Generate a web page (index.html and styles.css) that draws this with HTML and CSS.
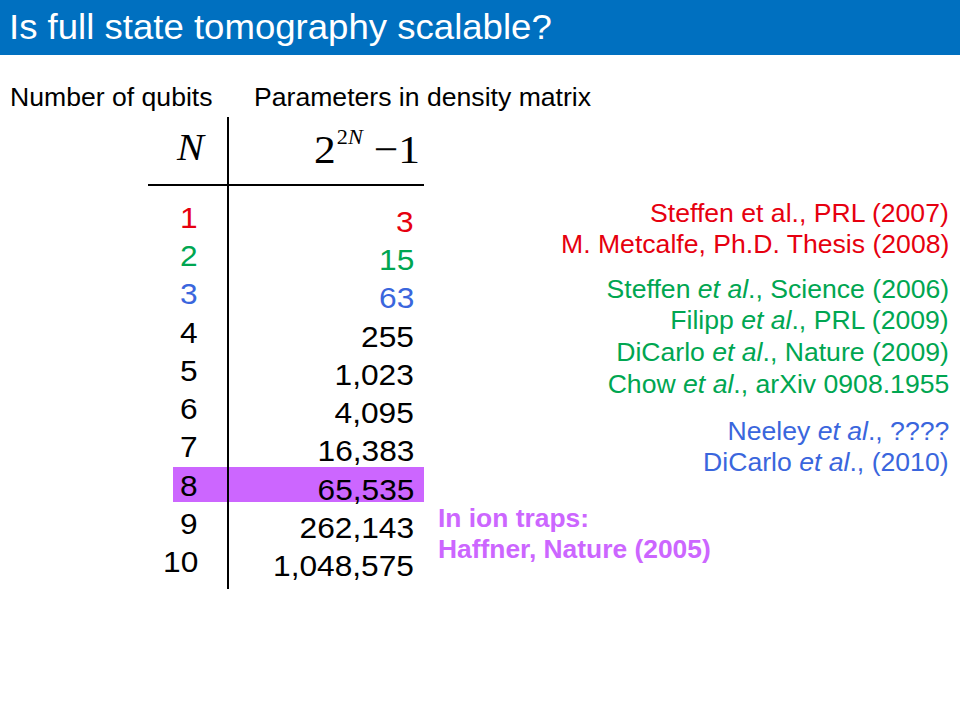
FILE: index.html
```html
<!DOCTYPE html>
<html lang="en">
<head>
<meta charset="utf-8">
<title>Is full state tomography scalable?</title>
<link rel="stylesheet" href="styles.css">
</head>
<body>
<header class="title-bar">
  <h1 class="title"><span class="sx sx-l">Is full state tomography scalable?</span></h1>
</header>

<div class="labels">
  <div class="label label-n"><span class="sx sx-l">Number of qubits</span></div>
  <div class="label label-p"><span class="sx sx-l">Parameters in density matrix</span></div>
</div>

<div class="content">
  <div class="qtable">
    <div class="col col-n">
      <div class="thead thead-n"><span class="sx sx-l math-n">N</span></div>
      <div class="tbody">
        <div class="cell red"><span class="sx sx-r">1</span></div>
        <div class="cell green"><span class="sx sx-r">2</span></div>
        <div class="cell blue"><span class="sx sx-r">3</span></div>
        <div class="cell"><span class="sx sx-r">4</span></div>
        <div class="cell"><span class="sx sx-r">5</span></div>
        <div class="cell"><span class="sx sx-r">6</span></div>
        <div class="cell"><span class="sx sx-r">7</span></div>
        <div class="cell hl"><span class="sx sx-r">8</span></div>
        <div class="cell"><span class="sx sx-r">9</span></div>
        <div class="cell"><span class="sx sx-r">10</span></div>
      </div>
    </div>
    <div class="col col-p">
      <div class="thead thead-p"><span class="sx sx-l formula">2<sup class="exp">2<i>N</i></sup> −1</span></div>
      <div class="tbody">
        <div class="cell red"><span class="sx sx-r">3</span></div>
        <div class="cell green"><span class="sx sx-r">15</span></div>
        <div class="cell blue"><span class="sx sx-r">63</span></div>
        <div class="cell"><span class="sx sx-r">255</span></div>
        <div class="cell"><span class="sx sx-r">1,023</span></div>
        <div class="cell"><span class="sx sx-r">4,095</span></div>
        <div class="cell"><span class="sx sx-r">16,383</span></div>
        <div class="cell hl"><span class="sx sx-r">65,535</span></div>
        <div class="cell"><span class="sx sx-r">262,143</span></div>
        <div class="cell"><span class="sx sx-r">1,048,575</span></div>
      </div>
    </div>
  </div>

  <div class="notes">
    <div class="group red">
      <div class="line"><span class="sx sx-r">Steffen et al., PRL (2007)</span></div>
      <div class="line"><span class="sx sx-r">M. Metcalfe, Ph.D. Thesis (2008)</span></div>
    </div>
    <div class="group green g-green">
      <div class="line"><span class="sx sx-r">Steffen <i>et al</i>., Science (2006)</span></div>
      <div class="line"><span class="sx sx-r">Filipp <i>et al</i>., PRL (2009)</span></div>
      <div class="line"><span class="sx sx-r">DiCarlo <i>et al</i>., Nature (2009)</span></div>
      <div class="line"><span class="sx sx-r">Chow <i>et al</i>., arXiv 0908.1955</span></div>
    </div>
    <div class="group blue g-blue">
      <div class="line"><span class="sx sx-r">Neeley <i>et al</i>., ????</span></div>
      <div class="line"><span class="sx sx-r">DiCarlo <i>et al</i>., (2010)</span></div>
    </div>
    <div class="group ion">
      <div class="line"><span class="sx sx-l">In ion traps:</span></div>
      <div class="line"><span class="sx sx-l">Haffner, Nature (2005)</span></div>
    </div>
  </div>
</div>
</body>
</html>
```

FILE: styles.css
```css
* {
  box-sizing: border-box;
}

html, body {
  margin: 0;
  padding: 0;
}

body {
  width: 960px;
  height: 720px;
  overflow: hidden;
  background: #ffffff;
  color: #000000;
  font-family: "Liberation Sans", Arial, sans-serif;
}

/* slightly wide text, as on the original slide */
.sx {
  display: inline-block;
  transform: scaleX(1.06);
  white-space: nowrap;
}

.sx-l {
  transform-origin: left center;
}

.sx-r {
  transform-origin: right center;
}

/* title bar */
.title-bar {
  height: 55px;
  background: #0070c0;
  padding-left: 8.8px;
}

.title {
  margin: 0;
  font-size: 34.5px;
  font-weight: normal;
  line-height: 55px;
  color: #ffffff;
}

/* column labels */
.labels {
  display: flex;
  margin-top: 26.4px;
  font-size: 25.1px;
  line-height: 32px;
}

.label-n {
  width: 254px;
  padding-left: 10px;
}

/* main area */
.content {
  display: flex;
  margin-top: 3.6px;
}

.qtable {
  display: flex;
  margin-left: 148px;
}

.col-n {
  width: 81px;
  border-right: 2px solid #000000;
  padding-bottom: 7px;
}

.col-p {
  width: 195px;
}

.thead {
  height: 69px;
  border-bottom: 2px solid #000000;
}

.thead-n {
  padding: 10px 0 0 29px;
}

.math-n {
  font-family: "Liberation Serif", "Times New Roman", serif;
  font-style: italic;
  font-size: 38px;
  line-height: 41px;
}

.thead-p {
  padding: 10.2px 0 0 84.7px;
}

.formula {
  font-family: "Liberation Serif", "Times New Roman", serif;
  font-size: 41px;
  line-height: 44px;
}

.exp {
  font-size: 21px;
  line-height: 0;
  vertical-align: 19.5px;
  margin-left: 1px;
}

.tbody {
  padding-top: 13.2px;
}

.cell {
  height: 35px;
  margin-bottom: 3.3px;
  padding-top: 2.5px;
  font-size: 29.9px;
  line-height: 32px;
  text-align: right;
}

.col-n .cell {
  padding-right: 29px;
}

.col-n .cell.hl {
  margin-left: 25px;
}

.col-p .cell {
  padding-top: 6.5px;
  padding-right: 10px;
}

.cell.hl {
  background: #cc66ff;
}

/* references */
.notes {
  flex: 1;
  display: flex;
  flex-direction: column;
  align-items: flex-end;
  padding-top: 80.6px;
  padding-right: 11px;
  font-size: 25.1px;
  line-height: 31.7px;
}

.line {
  text-align: right;
}

.g-green {
  margin-top: 12.8px;
}

.g-blue {
  margin-top: 15.2px;
}

.ion {
  align-self: flex-start;
  margin-left: 14px;
  margin-top: 23.6px;
  font-weight: bold;
  font-size: 24.9px;
  color: #cc66ff;
}

.ion .line {
  text-align: left;
}

.red {
  color: #e6000f;
}

.green {
  color: #00a651;
}

.blue {
  color: #3a66dd;
}
```
